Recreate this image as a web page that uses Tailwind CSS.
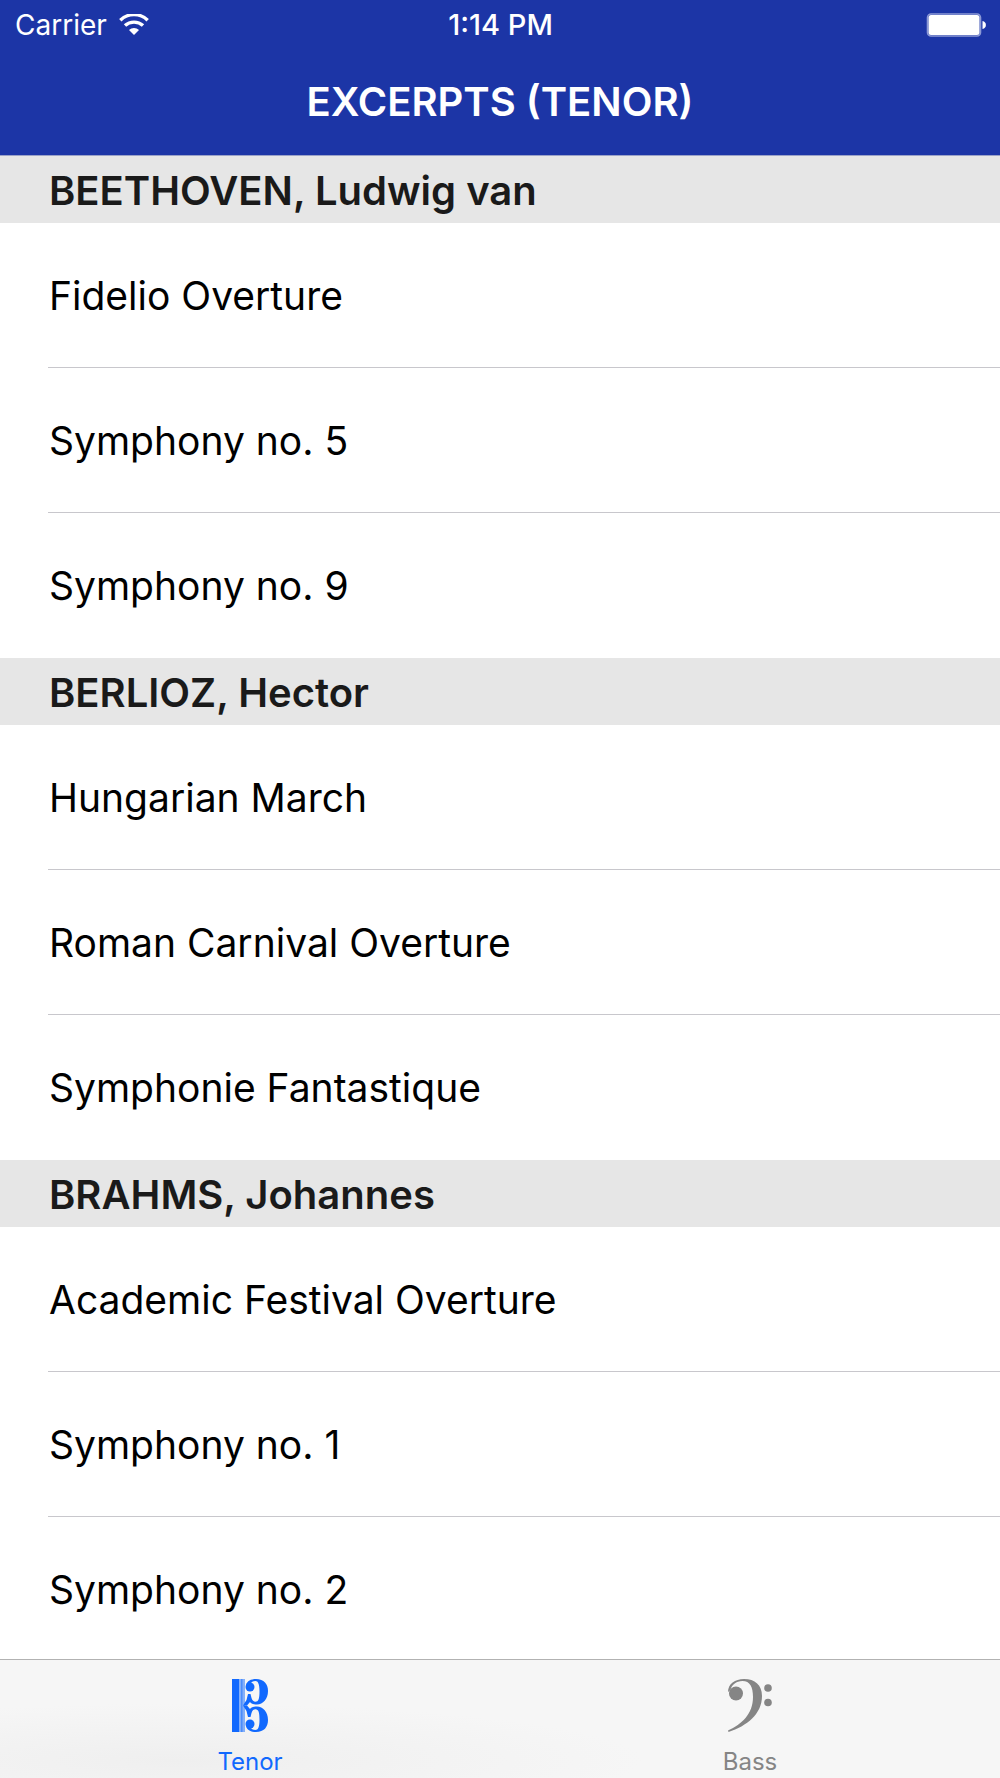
<!DOCTYPE html>
<html lang="en">
<head>
    <meta charset="UTF-8">
    <meta name="viewport" content="width=device-width, initial-scale=1.0">
    <title>Excerpts (Tenor)</title>
    <script src="https://cdn.jsdelivr.net/npm/@tailwindcss/browser@4"></script>
</head>
<body class="h-screen flex flex-col bg-white font-['Inter','Liberation_Sans',sans-serif] text-black">

    <header class="shrink-0 bg-[#1c35a6] text-white border-b border-[#9aa2c8]">
        <!-- Status bar -->
        <div class="grid grid-cols-3 items-center h-[50px] pl-[15px] pr-[14px]">
            <div class="flex items-center gap-3">
                <span class="text-[28px] leading-[50px]">Carrier</span>
                <svg class="w-[30px] h-[22px]" viewBox="0 0 30 22" fill="none" stroke="#fff" stroke-width="3.4" aria-hidden="true">
                    <path d="M1.3 6.2C9-1.2 21-1.2 28.7 6.2"/>
                    <path d="M6 11.600C11 6.900 19 6.900 24 11.600"/>
                    <path d="M10 16C12.800 13.200 17.200 13.200 20 16L15 21Z" fill="#fff" stroke="none"/>
                </svg>
            </div>
            <span class="text-center text-[29px] leading-[50px] font-medium">1:14 PM</span>
            <svg class="justify-self-end w-[60px] h-6" viewBox="0 0 60 24" aria-hidden="true">
                <rect x="1.500" y="1" width="53" height="22" rx="3.500" fill="none" stroke="#8d9ad6" stroke-width="1.600"/>
                <rect x="2.500" y="2" width="51" height="20" rx="2.500" fill="#fff"/>
                <path d="M56.500 8C61 8.500 61 15.500 56.500 16Z" fill="#fff"/>
            </svg>
        </div>
        <h1 class="h-[105px] text-center text-[40px] leading-[104px] font-semibold">EXCERPTS (TENOR)</h1>
    </header>

    <main class="flex-1 min-h-0 overflow-y-auto [scrollbar-width:none]">
        <section>
            <h2 class="h-[67px] pl-[49px] bg-[#e6e6e6] text-[#1a1a1a] text-[40px] leading-[70px] font-semibold">BEETHOVEN, Ludwig van</h2>
            <ul class="pl-12 divide-y divide-[#c8c7cc]">
                <li class="h-[145px]"><a class="block pl-px text-[39px] leading-[145px]" href="#">Fidelio Overture</a></li>
                <li class="h-[145px]"><a class="block pl-px text-[39px] leading-[145px]" href="#">Symphony no. 5</a></li>
                <li class="h-[145px]"><a class="block pl-px text-[39px] leading-[145px]" href="#">Symphony no. 9</a></li>
            </ul>
        </section>
        <section>
            <h2 class="h-[67px] pl-[49px] bg-[#e6e6e6] text-[#1a1a1a] text-[40px] leading-[70px] font-semibold">BERLIOZ, Hector</h2>
            <ul class="pl-12 divide-y divide-[#c8c7cc]">
                <li class="h-[145px]"><a class="block pl-px text-[39px] leading-[145px]" href="#">Hungarian March</a></li>
                <li class="h-[145px]"><a class="block pl-px text-[39px] leading-[145px]" href="#">Roman Carnival Overture</a></li>
                <li class="h-[145px]"><a class="block pl-px text-[39px] leading-[145px]" href="#">Symphonie Fantastique</a></li>
            </ul>
        </section>
        <section>
            <h2 class="h-[67px] pl-[49px] bg-[#e6e6e6] text-[#1a1a1a] text-[40px] leading-[70px] font-semibold">BRAHMS, Johannes</h2>
            <ul class="pl-12 divide-y divide-[#c8c7cc]">
                <li class="h-[145px]"><a class="block pl-px text-[39px] leading-[145px]" href="#">Academic Festival Overture</a></li>
                <li class="h-[145px]"><a class="block pl-px text-[39px] leading-[145px]" href="#">Symphony no. 1</a></li>
                <li class="h-[145px]"><a class="block pl-px text-[39px] leading-[145px]" href="#">Symphony no. 2</a></li>
            </ul>
        </section>
    </main>

    <!-- Tab bar -->
    <nav class="shrink-0 grid grid-cols-2 h-[119px] border-t border-[#b2b2b2] bg-[#f6f6f6] bg-[radial-gradient(ellipse_at_18%_85%,#efefef,#f6f6f6_40%)]">
        <a class="flex flex-col items-center pt-[19px] text-[#1169fe]" href="#" aria-current="page">
            <svg class="w-9 h-[53px]" viewBox="0 0 36 53" fill="currentColor" aria-hidden="true">
                <path d="M0 0H7V53H0Z"/>
                <path d="M7 0H13V53H7Z" opacity=".5"/>
                <path d="M9 0H10.500V53H9Z" opacity=".5"/>
                <!-- upper bowl, mirrored below -->
                <g id="bowl">
                    <path d="M14 6C15 2 19 0 24 0C32 0 36 5 36 12C36 20 31 25.500 25 25.500C21.500 25.500 19 24.500 18 23L15 26.500H11L14.500 21L16 15H18.500L19.500 19C20.500 22 22 23 24.500 22.600C27 22 27.500 18 27.500 12C27.500 5 26 2 23.500 2C21 2 19 3 18.500 5Z"/>
                    <circle cx="18" cy="8" r="4.500"/>
                </g>
                <use href="#bowl" transform="matrix(1 0 0 -1 0 53)"/>
            </svg>
            <span class="mt-3 text-[24px] leading-[36px]">Tenor</span>
        </a>
        <a class="flex flex-col items-center pt-[19px] text-[#858585]" href="#">
            <svg class="w-11 h-[53px]" viewBox="0 0 44 53" fill="currentColor" aria-hidden="true">
                <path d="M0 13C0 5 7 0 16 0C27 0 34 6 34 17C34 35 19 47 .500 53L0 51.500C14 45 25 35 25 18C25 8 22 2 14.500 2C8 2 3.500 6 2.500 11Z"/>
                <circle cx="8" cy="14.500" r="7"/>
                <circle cx="40" cy="9" r="3.800"/>
                <circle cx="40" cy="23.500" r="3.800"/>
            </svg>
            <span class="mt-3 text-[24px] leading-[36px]">Bass</span>
        </a>
    </nav>

</body>
</html>
